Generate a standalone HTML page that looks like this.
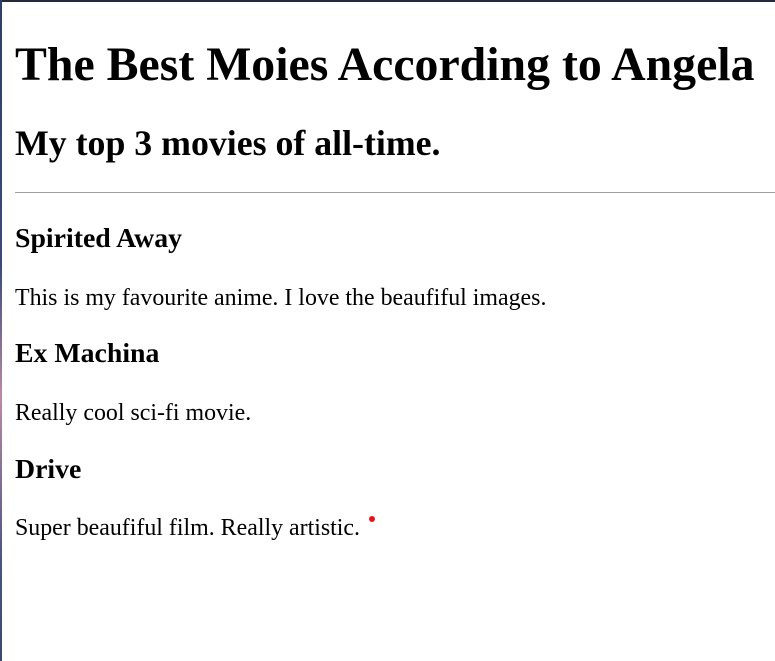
<!DOCTYPE html>
<html><head><style>
html,body{margin:0;padding:0;width:775px;height:661px;overflow:hidden;background:#fff}
body{font-family:"Liberation Serif",serif;color:#000;position:relative}
.lb{position:absolute;left:0;top:0;width:2px;height:661px;background:linear-gradient(#2f3e66 0%,#3a4a78 40%,#b98aa6 60%,#4a5480 85%,#3a4770 100%)}
.tb{position:absolute;left:0;top:0;width:775px;height:2px;background:#222a3a}
.t{position:absolute;left:15px;white-space:nowrap;line-height:1}
h1,h2,h3,p{margin:0;font-weight:bold}
p{font-weight:normal}
hr{position:absolute;left:15px;top:192px;width:760px;margin:0;border:0;border-top:1px solid #a0a0a0;height:0}
.dot{position:absolute;left:369px;top:516px;width:6px;height:6px;border-radius:50%;background:#e8141c}
</style></head><body>
<div class="tb"></div><div class="lb"></div>
<h1 class="t" style="font-size:47.8px;top:41px">The Best Moies According to Angela</h1>
<h2 class="t" style="font-size:35.8px;top:126px">My top 3 movies of all-time.</h2>
<hr>
<h3 class="t" style="font-size:27.8px;top:225px">Spirited Away</h3>
<p class="t" style="font-size:23.9px;top:287px">This is my favourite anime. I love the beaufiful images.</p>
<h3 class="t" style="font-size:27.8px;top:340px">Ex Machina</h3>
<p class="t" style="font-size:23.9px;top:402px">Really cool sci-fi movie.</p>
<h3 class="t" style="font-size:27.8px;top:456px">Drive</h3>
<p class="t" style="font-size:23.9px;top:517px">Super beaufiful film. Really artistic.</p>
<div class="dot"></div>
</body></html>
